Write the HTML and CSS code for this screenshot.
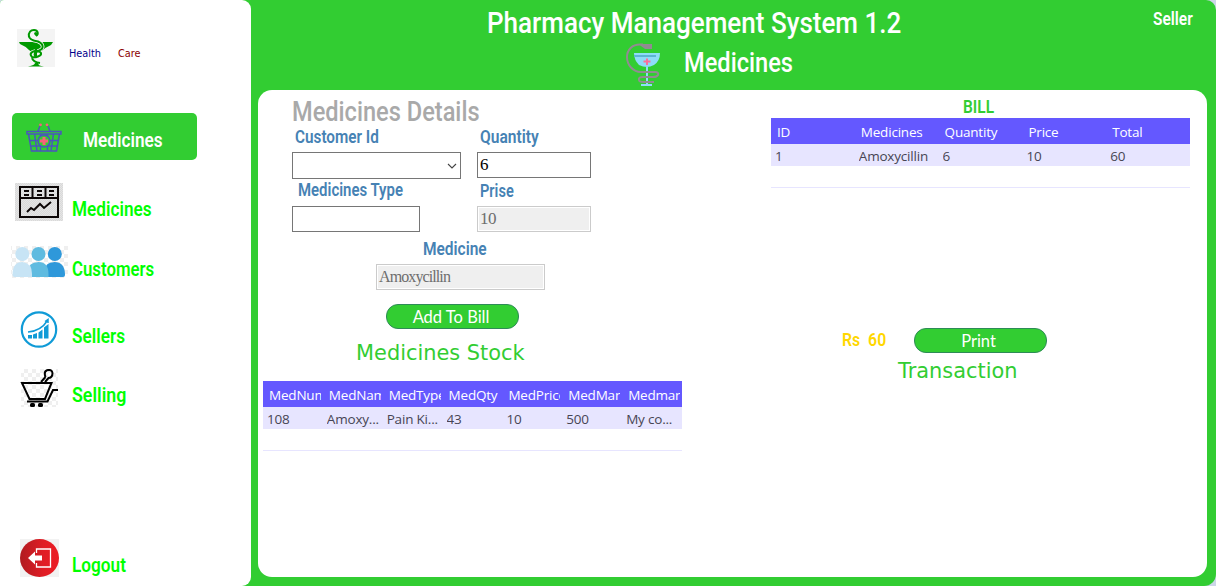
FILE: index.html
```html
<!DOCTYPE html>
<html lang="en">
<head>
<meta charset="utf-8">
<title>Pharmacy Management System</title>
<link rel="stylesheet" href="styles.css">
</head>
<body>
<div class="app">
  <aside class="sidebar">
    <div class="brand">
      <svg class="brand-logo" viewBox="0 0 38 38">
        <rect width="38" height="38" fill="#f4f4f4"/>
        <path d="M2 13H36L34 16Q29 18 25 22L22 24H16L12 21Q8 17 3 15Z" fill="#090"/>
        <path d="M12 8C11 3 14 1 17 1C21 1 22 5 19 7M12 7C12 11 18 12 21 12.500C27 15 27 20 22 21.500C14 22 12 25 15 28C18 29 25 27 24 24C22 21 16 23 18 27M15 29Q16 33 23 34" fill="none" stroke="#f4f4f4" stroke-width="3.600"/>
        <path d="M19 7L17 5Q17 3 19 3Q22 4 20 7ZM11 37.500Q18 36 18 34H21Q21 37 27 37.500Z" fill="#090"/>
        <path d="M12 8C11 3 14 1 17 1C21 1 22 5 19 7M12 7C12 11 18 12 21 12.500C27 15 27 20 22 21.500C14 22 12 25 15 28C18 29 25 27 24 24C22 21 16 23 18 27M15 29Q16 33 23 34M19 20V29" fill="none" stroke="#090" stroke-width="2"/>
      </svg>
      <span class="brand-health">Health</span>
      <span class="brand-care">Care</span>
    </div>
    <div class="current">
      <svg class="basket" viewBox="0 0 36 30">
        <g fill="none" stroke="#4b55bd" stroke-width="1.500">
          <path d="M1 8.500H35V11H1ZM2.500 11L5.500 28H30.500L33.500 11M3 17.500H33M5 23H31M8.500 11L11 28M27.500 11L25 28M14.500 11V28M21.500 11V28M12 8L14 3M24 8L22 3"/>
          <circle cx="18" cy="18" r="6" fill="#32cd32"/>
        </g>
        <path d="M16.500 14H19.500V16.500H22V19.500H19.500V22H16.500V19.500H14V16.500H16.500Z" fill="#f9607c"/>
        <circle cx="14.500" cy="1.800" r="1.400" fill="#f9607c"/><circle cx="21" cy="1.800" r="1.400" fill="#f9607c"/>
      </svg>
      <span class="cond nav-text">Medicines</span>
    </div>
    <nav class="nav">
      <a class="nav-item item-medicines">
        <svg viewBox="0 0 72 38">
          <defs><pattern id="grain" width="2" height="2" patternUnits="userSpaceOnUse"><rect width="2" height="2" fill="#e5e5e5"/><path d="M0 0H1V1H0ZM1 1H2V2H1Z" fill="#d9d9d9"/></pattern></defs>
          <rect x="15" width="48" height="38" fill="url(#grain)"/>
          <g fill="none" stroke="#0c0606" stroke-width="2"><path d="M20 4H58V34H20ZM20 15H58M32.500 4V15M45.500 4V15"/><path d="M24 8H29M24 12H29M37 8H42M37 12H42M49 8H54M49 12H54" stroke-width="1.800"/><path d="M27 29L31 25L34 27L40 21L44 25L51 19"/></g>
        </svg>
        <span class="cond nav-text">Medicines</span>
      </a>
      <a class="nav-item item-customers">
        <svg viewBox="0 0 72 32">
          <defs><pattern id="check" width="8" height="8" patternUnits="userSpaceOnUse"><rect width="8" height="8" fill="#fff"/><path d="M0 0H4V4H0ZM4 4H8V8H4Z" fill="#efefef"/></pattern></defs>
          <rect x="11" width="57" height="32" fill="url(#check)"/>
          <g fill="#2e98da"><circle cx="54.800" cy="8" r="7"/><path d="M44.500 31V26Q44.500 16 54.500 16Q64.500 16 65 28V29Q65 31 63 31Z"/></g>
          <g fill="#5fbbe0"><circle cx="38.500" cy="8" r="7"/><path d="M28 31V26Q28 16 38.500 16Q48.500 16 48.500 28V31Z"/></g>
          <g fill="#c7e4f5"><circle cx="22.300" cy="8" r="7"/><path d="M12.500 29Q12.500 16 22.500 16Q32 17 32 28V31H14.500Q12.500 31 12.500 29Z"/></g>
        </svg>
        <span class="cond nav-text">Customers</span>
      </a>
      <a class="nav-item item-sellers">
        <svg viewBox="0 0 72 37">
          <g fill="none" stroke="#109bd7"><circle cx="39" cy="18.500" r="17.200" stroke-width="2.200"/><path d="M28 21Q41 20 47.500 9.500M45 10.500L48 8.500V12" stroke-width="1.500"/></g>
          <path d="M28 24H32V27.500H28ZM33 23.500L37 22V27.500H33ZM38.500 21.500L42.500 18.500V27.500H38.500ZM44 16.500L48.500 13V27.500H44Z" fill="#109bd7"/>
        </svg>
        <span class="cond nav-text">Sellers</span>
      </a>
      <a class="nav-item item-selling">
        <svg viewBox="0 0 72 38">
          <rect x="21" width="37" height="38" fill="url(#check)"/>
          <g fill="none" stroke="#000" stroke-width="2"><path d="M22 14H51.500L45 30H29.500ZM27 32.500H47.500L53 21H58M41 13L45.500 8M45 13L48.500 9"/><path d="M45.500 8Q43.500 2.500 47 1.200Q52 0 52.500 4Q52.500 9 48 9"/></g>
          <rect x="30" y="34" width="5" height="4" rx="1.500"/><rect x="38" y="34" width="5" height="4" rx="1.500"/>
        </svg>
        <span class="cond nav-text">Selling</span>
      </a>
      <a class="nav-item item-logout">
        <svg viewBox="0 0 72 38">
          <defs><linearGradient id="red"><stop offset="0" stop-color="#b01b20"/><stop offset=".6" stop-color="#e01d25"/><stop offset="1" stop-color="#ec1c24"/></linearGradient></defs>
          <rect x="20" width="39" height="38" fill="#f2f2f2"/><ellipse cx="39.500" cy="19" rx="19.500" ry="19" fill="url(#red)"/>
          <path d="M36.500 14V10H50.500V28H36.500V24" fill="none" stroke="#fff" stroke-width="1.300"/>
          <path d="M28 19L35 12.500V16.500H42V21.500H35V25.500Z" fill="#fff"/>
        </svg>
        <span class="cond nav-text">Logout</span>
      </a>
    </nav>
  </aside>

  <main class="main">
    <header class="top">
      <h1 class="cond title">Pharmacy Management System 1.2</h1>
      <span class="cond user">Seller</span>
    </header>
    <div class="subtitle-row">
      <svg class="chalice" viewBox="0 0 35 44">
        <path d="M8 10H34Q34 18 28 22Q24 24 21 24Q17 24 13 22Q8 17 8 10ZM20 24H22V41H26V43H15V41H20Z" fill="#8edcf8"/>
        <path d="M8 13H30" stroke="#5cb4d3" stroke-width="2"/>
        <path d="M21 15.500V22M17.500 18.500H24.500" stroke="#fa6f9d" stroke-width="2"/>
        <path d="M17 1.500H15C6 1 1 7 1 14C1 22 7 29 15 29H29Q33 29 32 32Q31 34 27 34H17Q12 34 13 37Q13 39 18 39H28" fill="none" stroke="#918b91" stroke-width="2"/>
        <path d="M13 1H26V6H19L15 3Z" fill="#918b91"/>
      </svg>
      <h2 class="cond subtitle">Medicines</h2>
    </div>

    <section class="panel">
      <div class="left">
        <h3 class="cond details">Medicines Details</h3>
        <div class="form">
          <div class="field">
            <label class="cond label l-customer">Customer Id</label>
            <div class="input select"><svg viewBox="0 0 10 6"><path d="M1 1L5 5L9 1" fill="none" stroke="#444" stroke-width="1.100"/></svg></div>
          </div>
          <div class="field">
            <label class="cond label l-quantity">Quantity</label>
            <div class="input">6</div>
          </div>
          <div class="field">
            <label class="cond label l-type">Medicines Type</label>
            <div class="input type"></div>
          </div>
          <div class="field">
            <label class="cond label l-prise">Prise</label>
            <div class="input disabled">10</div>
          </div>
        </div>
        <div class="medicine">
          <label class="cond label l-medicine">Medicine</label>
          <div class="input disabled name">Amoxycillin</div>
          <div class="button">Add To Bill</div>
        </div>
        <h4 class="stock-title">Medicines Stock</h4>
        <div class="table stock">
          <div class="tr th"><span>MedNum</span><span>MedName</span><span>MedType</span><span>MedQty</span><span>MedPrice</span><span>MedManf</span><span>Medmanf</span></div>
          <div class="tr td"><span>108</span><span>Amoxy...</span><span>Pain Ki...</span><span>43</span><span>10</span><span>500</span><span>My co...</span></div>
        </div>
      </div>
      <div class="right">
        <h4 class="cond bill-title">BILL</h4>
        <div class="table bill">
          <div class="tr th"><span>ID</span><span>Medicines</span><span>Quantity</span><span>Price</span><span>Total</span></div>
          <div class="tr td"><span>1</span><span>Amoxycillin</span><span>6</span><span>10</span><span>60</span></div>
        </div>
        <div class="total-row">
          <span class="cond amount">Rs&nbsp; 60</span>
          <div class="button">Print</div>
        </div>
        <h4 class="transaction">Transaction</h4>
      </div>
    </section>
  </main>
</div>
</body>
</html>
```
FILE: styles.css
```css
* { box-sizing: border-box; }
body { margin: 0; background: #ccd6e8; overflow: hidden; }
h1, h2, h3, h4 { margin: 0; font-weight: 500; }
svg { display: block; }

.app { width: 1216px; height: 586px; display: flex; background: #32cd32; border-radius: 4px 10px 12px 0; overflow: hidden; }

/* condensed headings and labels */
.cond {
  display: block;
  width: max-content;
  font-family: Roboto, sans-serif;
  font-weight: 600;
  white-space: nowrap;
  transform: scaleX(var(--sx, 0.86));
  transform-origin: 0 0;
}

/* sidebar */
.sidebar { width: 251px; height: 586px; background: #fff; border-radius: 0 9px 9px 0; flex: none; }
.brand { display: flex; align-items: flex-start; height: 113px; padding: 29px 0 0 17px; font: 10.800px/14px "DejaVu Sans Condensed", "DejaVu Sans", sans-serif; }
.brand-logo { width: 38px; height: 38px; }
.brand-health { width: 49px; margin: 18px 0 0 14px; color: #00008b; }
.brand-care { margin-top: 18px; color: #8b0000; }
.current { display: flex; width: 185px; height: 47px; margin-left: 12px; padding: 10px 0 0 14px; border-radius: 5px; background: #32cd32; }
.current .basket { width: 36px; height: 30px; }
.current .nav-text { margin: 5px 0 0 21px; color: #fff; }
.nav-text { font-size: 20px; line-height: 24px; color: #0f0; }
.nav { padding-top: 23px; }
.nav-item { display: flex; height: 38px; }
.nav-item svg { width: 72px; height: 100%; flex: none; }
.nav-item .nav-text { margin-top: 14px; }
.item-customers { height: 32px; margin-top: 25px; }
.item-customers .nav-text { margin-top: 11px; --sx: 0.84; }
.item-sellers { height: 37px; margin-top: 33px; }
.item-sellers .nav-text { margin-top: 13px; }
.item-selling { margin-top: 21px; }
.item-selling .nav-text { --sx: 0.89; }
.item-logout { margin-top: 132px; }

/* header */
.main { width: 965px; }
.top { display: flex; height: 43px; padding-left: 236px; color: #fff; }
.title { width: 666px; margin-top: 6px; font-size: 29px; line-height: 34px; font-weight: 500; flex: none; --sx: 0.897; }
.user { margin-top: 9px; font-size: 18px; line-height: 20px; }
.subtitle-row { display: flex; height: 47px; padding-left: 375px; color: #fff; }
.chalice { width: 35px; height: 44px; }
.subtitle { margin: 4px 0 0 23px; font-size: 27px; line-height: 32px; font-weight: 500; --sx: 0.875; }

/* panel */
.panel { display: grid; grid-template-columns: 419px 419px; column-gap: 89px; width: 949px; height: 487px; margin-left: 7px; padding-left: 5px; border-radius: 14px; background: #fff; }
.details { padding-top: 6px; margin-left: 29px; height: 37px; font-size: 28px; line-height: 32px; font-weight: 500; color: #a9a9a9; --sx: 0.843; }
.form { display: grid; grid-template-columns: 169px 114px; grid-template-rows: 52px 53px; column-gap: 16px; padding-left: 29px; }
.label { font-size: 18px; line-height: 20px; color: #4682b4; }
.l-customer, .l-quantity { margin-left: 3px; --sx: 0.85; }
.l-quantity { --sx: 0.865; }
.l-type { margin: 1px 0 0 6px; --sx: 0.83; }
.l-prise { margin: 2px 0 0 3px; --sx: 0.81; }
.input { height: 26px; padding-left: 2px; border: 1px solid #767676; background: #fff; color: #000; font: 17px/24px "Liberation Serif", serif; letter-spacing: -0.500px; }
.form .input { margin-top: 5px; }
.form .field:nth-child(3) .input { margin-top: 6px; }
.form .field:nth-child(4) .input { margin-top: 5px; }
.select { display: flex; height: 27px; align-items: center; justify-content: flex-end; padding-right: 3px; }
.select svg { width: 10px; height: 6px; }
.type { width: 128px; }
.disabled { border-color: #cbcbcb; background: #efefef; box-shadow: inset 0 0 0 1px #fff; color: #6d6d6d; }
.medicine { display: flex; flex-direction: column; align-items: flex-start; padding: 7px 0 0 113px; }
.l-medicine { margin-left: 47px; }
.name { width: 169px; margin-top: 5px; font-size: 16px; letter-spacing: -0.900px; }
.button { width: 133px; height: 25px; border: 1px solid #2e8b57; border-radius: 12px; background: #32cd32; color: #fff; font: 400 16.500px/24px Lato, sans-serif; text-align: center; }
.medicine .button { margin: 14px 0 0 10px; padding-right: 3px; }
.stock-title, .transaction { font: 20.900px/24px "DejaVu Sans", sans-serif; color: #32cd32; }
.stock-title { height: 40px; margin: 12px 0 0 93px; }

/* tables */
.table { width: 419px; border-bottom: 1px solid #e7e5ff; font: 13.500px/24px "Open Sans", sans-serif; letter-spacing: -0.200px; }
.stock, .bill { height: 70px; }
.tr { display: grid; }
.stock .tr { grid-template-columns: repeat(7, 1fr); }
.bill .tr { grid-template-columns: repeat(5, 1fr); }
.tr span { overflow: hidden; white-space: nowrap; }
.th { height: 26px; padding-top: 2px; background: #6458ff; color: #fff; }
.th span { margin: 0 2px 0 6px; }
.td { height: 22px; background: #e7e5ff; color: #474554; }
.td span { margin-left: 4px; }

/* bill side */
.bill-title { margin: 7px 0 1px 192px; font-size: 18px; line-height: 20px; color: #32cd32; }
.total-row { display: flex; height: 25px; margin-top: 140px; padding-left: 71px; }
.amount { width: 72px; margin-top: 2px; font-size: 18px; line-height: 20px; color: #ffd700; --sx: 0.88; }
.total-row .button { padding-right: 4px; }
.transaction { margin: 6px 0 0 127px; }
```
